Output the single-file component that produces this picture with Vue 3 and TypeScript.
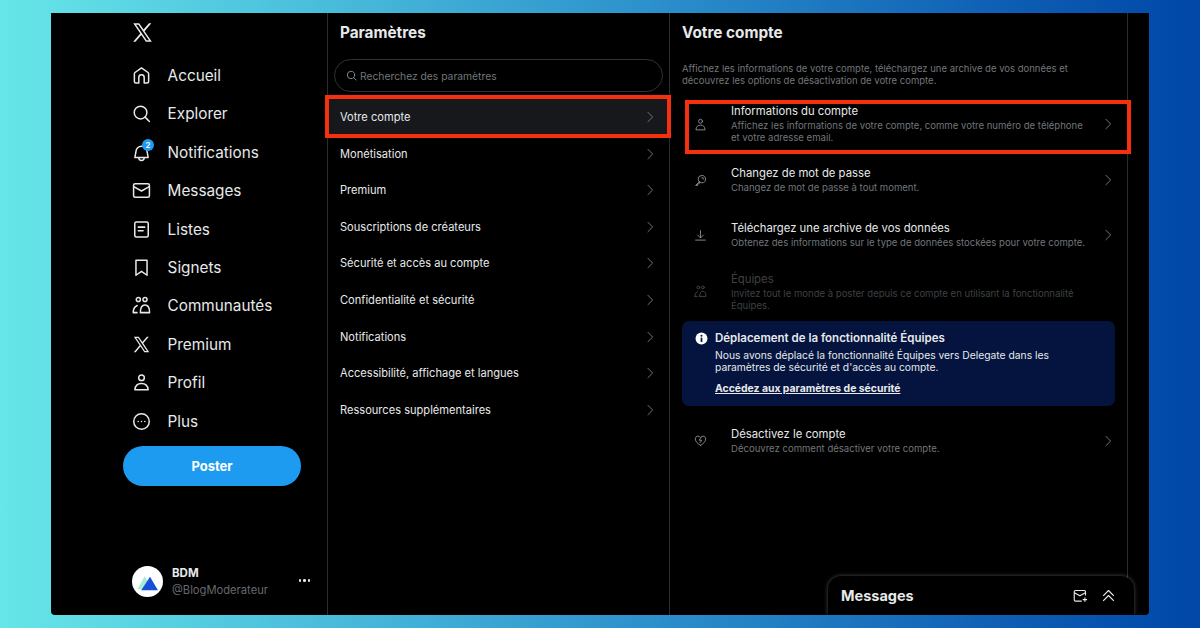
<script setup lang="ts">
interface NavItem {
  label: string
  icon: string
}

interface AccountRow {
  title: string
  desc: string[]
  icon: string
  height: number
  disabled?: boolean
}

const navItems: NavItem[] = [
  { label: 'Accueil', icon: 'home' },
  { label: 'Explorer', icon: 'search' },
  { label: 'Notifications', icon: 'bell' },
  { label: 'Messages', icon: 'mail' },
  { label: 'Listes', icon: 'list' },
  { label: 'Signets', icon: 'bookmark' },
  { label: 'Communautés', icon: 'people' },
  { label: 'Premium', icon: 'x' },
  { label: 'Profil', icon: 'user' },
  { label: 'Plus', icon: 'more' }
]

const settings = [
  'Votre compte',
  'Monétisation',
  'Premium',
  'Souscriptions de créateurs',
  'Sécurité et accès au compte',
  'Confidentialité et sécurité',
  'Notifications',
  'Accessibilité, affichage et langues',
  'Ressources supplémentaires'
]

const topRows: AccountRow[] = [
  {
    title: 'Informations du compte',
    desc: ['Affichez les informations de votre compte, comme votre numéro de téléphone', 'et votre adresse email.'],
    icon: 'user',
    height: 56
  },
  {
    title: 'Changez de mot de passe',
    desc: ['Changez de mot de passe à tout moment.'],
    icon: 'key',
    height: 56
  },
  {
    title: 'Téléchargez une archive de vos données',
    desc: ['Obtenez des informations sur le type de données stockées pour votre compte.'],
    icon: 'download',
    height: 54
  },
  {
    title: 'Équipes',
    desc: ['Invitez tout le monde à poster depuis ce compte en utilisant la fonctionnalité', 'Équipes.'],
    icon: 'people',
    height: 59,
    disabled: true
  }
]

const deactivateRow: AccountRow = {
  title: 'Désactivez le compte',
  desc: ['Découvrez comment désactiver votre compte.'],
  icon: 'heart',
  height: 55
}
</script>

<template>
  <div class="page">
    <div class="window">
      <aside class="sidebar">
        <svg class="logo" viewBox="0 0 24 24">
          <path d="M21.742 21.75l-7.563-11.179 7.056-8.321h-2.456l-5.691 6.714-4.54-6.714H2.359l7.29 10.776L2.25 21.75h2.456l6.035-7.118 4.818 7.118h6.191-.008zM7.739 3.818L18.81 20.182h-2.447L5.29 3.818h2.447z" />
        </svg>
        <nav class="nav">
          <div v-for="item in navItems" :key="item.label" class="nav-item">
            <span class="nav-icon">
              <svg viewBox="0 0 24 24" class="icon">
                <path v-if="item.icon === 'home'" d="M12 2.4 20.2 8.2a2 2 0 0 1 .8 1.6v9.700a2 2 0 0 1-2 2h-3.600v-7a3.400 3.400 0 0 0-6.800 0v7H5a2 2 0 0 1-2-2V9.800a2 2 0 0 1 .8-1.600z" />
                <g v-else-if="item.icon === 'search'">
                  <circle cx="10.8" cy="10.8" r="8" />
                  <path d="M16.6 16.6 22 22" />
                </g>
                <g v-else-if="item.icon === 'bell'">
                  <path d="M12 4a7 7 0 0 0-7 6.8L3.6 18.4h16.800L19 10.300a7 7 0 0 0-7-6.300z" />
                  <path d="M8.6 18.6a3.4 3.4 0 0 0 6.8 0" />
                </g>
                <g v-else-if="item.icon === 'mail'">
                  <rect x="2" y="3.5" width="20" height="17" rx="2" />
                  <path d="M2.2 7.2 12 12.6l9.8-5.4" />
                </g>
                <g v-else-if="item.icon === 'list'">
                  <rect x="3.5" y="2.5" width="17" height="19" rx="2" />
                  <path d="M8 9h8M8 13.5h6" />
                </g>
                <path v-else-if="item.icon === 'bookmark'" d="M5 2.8h14v19l-7-5-7 5z" />
                <g v-else-if="item.icon === 'people'">
                  <circle cx="8" cy="4.5" r="2.6" />
                  <circle cx="16.4" cy="4.5" r="2.6" />
                  <path d="M10.6 21h11.6c0-6-2-9.600-5.800-9.600s-5.800 3.600-5.800 9.600z" />
                  <path d="M1.5 21h4.8M1.6 20.6c0-3.6 1.6-7.2 5-8.6" />
                </g>
                <path v-else-if="item.icon === 'x'" class="filled" d="M21.742 21.75l-7.563-11.179 7.056-8.321h-2.456l-5.691 6.714-4.54-6.714H2.359l7.29 10.776L2.25 21.75h2.456l6.035-7.118 4.818 7.118h6.191-.008zM7.739 3.818L18.81 20.182h-2.447L5.29 3.818h2.447z" />
                <g v-else-if="item.icon === 'user'">
                  <circle cx="12" cy="6" r="3.6" />
                  <path d="M3.6 21.2c.4-5.6 3.6-8 8.4-8s8 2.4 8.4 8z" />
                </g>
                <g v-else>
                  <circle cx="12" cy="12" r="9.8" />
                  <circle class="filled" cx="7.8" cy="12" r="1" />
                  <circle class="filled" cx="12" cy="12" r="1" />
                  <circle class="filled" cx="16.2" cy="12" r="1" />
                </g>
              </svg>
              <span v-if="item.icon === 'bell'" class="badge">2</span>
            </span>
            <span class="nav-label">{{ item.label }}</span>
          </div>
        </nav>
        <button class="post-btn" type="button">Poster</button>
        <div class="account">
          <svg class="avatar" viewBox="0 0 32 32">
            <circle cx="16" cy="16" r="16" fill="#fff" />
            <path d="M5.5 24 13 10.5l2.8 4.6L11 24z" fill="#a8ecd3" />
            <path d="M9.5 25 18.6 11 26.8 25z" fill="#1450d8" />
          </svg>
          <div class="account-text">
            <div class="account-name">BDM</div>
            <div class="account-handle">@BlogModerateur</div>
          </div>
          <span class="account-more">
            <i></i><i></i><i></i>
          </span>
        </div>
      </aside>

      <section class="settings">
        <h2 class="heading">Paramètres</h2>
        <div class="search">
          <svg viewBox="0 0 24 24" class="search-icon">
            <circle cx="10.8" cy="10.8" r="8" />
            <path d="M16.6 16.6 22 22" />
          </svg>
          <span>Recherchez des paramètres</span>
        </div>
        <div class="settings-list">
          <div
            v-for="(name, index) in settings"
            :key="name"
            class="settings-row"
            :class="{ active: index === 0 }"
          >
            <span>{{ name }}</span>
            <svg viewBox="0 0 24 24" class="chevron"><path d="M8 3.5 16.5 12 8 20.5" /></svg>
          </div>
        </div>
      </section>

      <section class="detail">
        <h2 class="heading">Votre compte</h2>
        <p class="intro">
          Affichez les informations de votre compte, téléchargez une archive de vos données et<br />
          découvrez les options de désactivation de votre compte.
        </p>
        <div class="rows">
          <div
            v-for="(row, index) in topRows"
            :key="row.title"
            class="row"
            :class="{ disabled: row.disabled, highlighted: index === 0 }"
            :style="{ height: row.height + 'px' }"
          >
            <svg viewBox="0 0 24 24" class="row-icon">
              <g v-if="row.icon === 'user'">
                <circle cx="12" cy="6" r="3.6" />
                <path d="M3.6 21.2c.4-5.6 3.600-8 8.400-8s8 2.400 8.400 8z" />
              </g>
              <g v-else-if="row.icon === 'key'">
                <circle cx="14.5" cy="9.5" r="6.8" />
                <path d="M9.8 14.4 3 21.2h3.2l.4-2.800 3-.4.4-2.800" />
                <path d="M14.5 7H17v2.500" />
              </g>
              <g v-else-if="row.icon === 'download'">
                <path d="M12 3v13M6.5 11l5.500 5.500 5.500-5.500M3 20.500h18" />
              </g>
              <g v-else>
                <circle cx="8" cy="4.5" r="2.6" />
                <circle cx="16.4" cy="4.5" r="2.6" />
                <path d="M10.6 21h11.6c0-6-2-9.600-5.800-9.600s-5.800 3.600-5.800 9.600z" />
                <path d="M1.5 21h4.8M1.6 20.6c0-3.6 1.6-7.2 5-8.6" />
              </g>
            </svg>
            <div class="row-text">
              <div class="row-title">{{ row.title }}</div>
              <div class="row-desc">
                <div v-for="line in row.desc" :key="line">{{ line }}</div>
              </div>
            </div>
            <svg v-if="!row.disabled" viewBox="0 0 24 24" class="chevron"><path d="M8 3.5 16.5 12 8 20.5" /></svg>
          </div>
        </div>

        <div class="notice">
          <svg viewBox="0 0 24 24" class="notice-icon">
            <circle cx="12" cy="12" r="11" fill="#fff" />
            <rect x="10.4" y="10.4" width="3.2" height="8" fill="#04143f" />
            <circle cx="12" cy="7" r="1.9" fill="#04143f" />
          </svg>
          <div>
            <div class="notice-title">Déplacement de la fonctionnalité Équipes</div>
            <p class="notice-body">
              Nous avons déplacé la fonctionnalité Équipes vers Delegate dans les<br />
              paramètres de sécurité et d'accès au compte.
            </p>
            <span class="notice-link">Accédez aux paramètres de sécurité</span>
          </div>
        </div>

        <div class="row deactivate" :style="{ height: deactivateRow.height + 'px' }">
          <svg viewBox="0 0 24 24" class="row-icon">
            <path d="M12 21C6 17.5 2.4 13.4 2.4 9c0-3 2.200-5 4.800-5 1.900 0 3.700 1 4.800 2.400C13.100 5 14.900 4 16.800 4c2.600 0 4.800 2 4.800 5 0 4.400-3.600 8.500-9.600 12z" />
            <path d="M13 6.5 9.5 11.5h5L11 16" />
          </svg>
          <div class="row-text">
            <div class="row-title">{{ deactivateRow.title }}</div>
            <div class="row-desc">
              <div v-for="line in deactivateRow.desc" :key="line">{{ line }}</div>
            </div>
          </div>
          <svg viewBox="0 0 24 24" class="chevron"><path d="M8 3.5 16.5 12 8 20.5" /></svg>
        </div>
      </section>

      <div class="drawer">
        <span class="drawer-title">Messages</span>
        <svg viewBox="0 0 24 24" class="drawer-icon">
          <path d="M20 12V6a2 2 0 0 0-2-2H4a2 2 0 0 0-2 2v13a2 2 0 0 0 2 2h10" />
          <path d="M2.2 7.5 11 12.5l8.800-5M19 15v7M15.5 18.5h7" />
        </svg>
        <svg viewBox="0 0 24 24" class="drawer-icon chev-up">
          <path d="M3.5 12.5 12 4l8.500 8.500M3.500 20.500 12 12l8.500 8.500" />
        </svg>
      </div>
    </div>
  </div>
</template>

<style scoped>
.page {
  width: 1200px;
  height: 628px;
  box-sizing: border-box;
  padding: 13px 51px;
  overflow: hidden;
  background: linear-gradient(90deg, #66e6e8 0%, #4fc4de 22%, #2b8fcb 55%, #0d5cb3 85%, #0047a8 100%);
  font-family: Inter, 'Noto Sans', sans-serif;
  color: #e7e9ea;
}

.window {
  position: relative;
  display: flex;
  width: 1098px;
  height: 602px;
  background: #000;
  border-radius: 0 0 4px 4px;
  overflow: hidden;
}

.sidebar {
  display: flex;
  flex-direction: column;
  width: 277px;
  flex: none;
  box-sizing: border-box;
  padding: 8px 0 0 72px;
  border-right: 1px solid #2a2d30;
}

.logo {
  width: 23px;
  height: 23px;
  margin-left: 8px;
  fill: #e7e9ea;
}

.nav {
  display: flex;
  flex-direction: column;
  margin-top: 12.4px;
}

.nav-item {
  display: flex;
  align-items: center;
  height: 38.4px;
  padding-left: 9px;
}

.nav-icon {
  position: relative;
  display: flex;
  width: 35.6px;
  flex: none;
}

.icon {
  width: 19px;
  height: 19px;
  fill: none;
  stroke: #e7e9ea;
  stroke-width: 1.9;
  stroke-linejoin: round;
  stroke-linecap: round;
}

.icon .filled {
  fill: #e7e9ea;
  stroke: none;
}

.badge {
  position: absolute;
  left: 10px;
  top: -4px;
  width: 12px;
  height: 12px;
  border-radius: 50%;
  background: #1d9bf0;
  color: #fff;
  font-size: 8px;
  font-weight: 600;
  line-height: 12px;
  text-align: center;
}

.nav-label {
  font-size: 15.3px;
}

.post-btn {
  width: 178px;
  height: 40px;
  margin-top: 5.6px;
  border: none;
  border-radius: 20px;
  background: #1d9bf0;
  color: #fff;
  font-family: inherit;
  font-size: 13px;
  font-weight: 700;
}

.account {
  display: flex;
  align-items: center;
  margin-top: 80px;
  padding-left: 9px;
}

.avatar {
  width: 31px;
  height: 31px;
  flex: none;
}

.account-text {
  margin-left: 9px;
  flex: 1;
}

.account-name {
  font-size: 11.5px;
  font-weight: 700;
  line-height: 15px;
}

.account-handle {
  margin-top: 1px;
  font-size: 11.2px;
  line-height: 16px;
  color: #65696e;
}

.account-more {
  display: flex;
  gap: 2px;
  margin-right: 17px;
  margin-top: -3px;
}

.account-more i {
  width: 2.5px;
  height: 2.5px;
  border-radius: 50%;
  background: #e7e9ea;
}

.settings {
  width: 342px;
  flex: none;
  box-sizing: border-box;
  border-right: 1px solid #2a2d30;
}

.heading {
  margin: 0;
  padding: 10px 0 0 12px;
  font-size: 15.3px;
  font-weight: 700;
  line-height: 20px;
  color: #e7e9ea;
}

.search {
  display: flex;
  align-items: center;
  box-sizing: border-box;
  height: 33px;
  margin: 16px 6px 0 6px;
  padding-left: 11px;
  border: 1px solid #2f3336;
  border-radius: 17px;
  font-size: 10.3px;
  color: #71767b;
}

.search-icon {
  width: 11px;
  height: 11px;
  margin-right: 3px;
  fill: none;
  stroke: #8b9094;
  stroke-width: 2;
  stroke-linecap: round;
}

.settings-list {
  display: flex;
  flex-direction: column;
  margin-top: 3px;
}

.settings-row {
  display: flex;
  align-items: center;
  justify-content: space-between;
  flex: none;
  height: 36.6px;
  padding: 0 12px 0 12px;
  font-size: 11.1px;
  color: #e7e9ea;
}

.chevron {
  width: 14px;
  height: 14px;
  flex: none;
  fill: none;
  stroke: #71767b;
  stroke-width: 1.7;
}

.settings-row.active {
  position: relative;
  z-index: 1;
  height: 43px;
  margin: 0 -2px -2.7px -3px;
  padding: 0 14px 0 15px;
  background: #16181c;
  outline: 4px solid #f4300f;
  outline-offset: -4px;
}

.detail {
  flex: none;
  width: 458px;
  box-sizing: border-box;
  border-right: 1px solid #2a2d30;
}

.intro {
  margin: 20px 0 0 12px;
  font-size: 9.5px;
  line-height: 12.2px;
  color: #71767b;
}

.rows {
  display: flex;
  flex-direction: column;
  margin-top: 8.6px;
}

.row {
  display: flex;
  align-items: center;
  position: relative;
  box-sizing: border-box;
  padding: 0 12px 0 24px;
}

.row.highlighted::after {
  content: '';
  position: absolute;
  left: 15px;
  right: -4px;
  top: 4px;
  bottom: -2px;
  border: 4px solid #f4300f;
  pointer-events: none;
}

.row-icon {
  width: 13px;
  height: 13px;
  flex: none;
  fill: none;
  stroke: #8b9094;
  stroke-width: 1.7;
  stroke-linejoin: round;
  stroke-linecap: round;
}

.row-text {
  flex: 1;
  margin-left: 24px;
}

.row-title {
  font-size: 11.3px;
  line-height: 14px;
  color: #e7e9ea;
}

.row-desc {
  margin-top: 2px;
  font-size: 9.55px;
  line-height: 12px;
  color: #71767b;
}

.row.disabled .row-title,
.row.disabled .row-desc {
  color: #3e4144;
}

.row.disabled .row-icon {
  stroke: #44474a;
}

.notice {
  display: flex;
  gap: 7px;
  width: 433px;
  height: 85px;
  box-sizing: border-box;
  margin: 0 0 0 12px;
  padding: 10px 13px;
  border-radius: 7px;
  background: #04143f;
}

.notice-icon {
  width: 13px;
  height: 13px;
  flex: none;
  margin-top: 1px;
}

.notice-title {
  font-size: 11.5px;
  font-weight: 600;
  line-height: 15px;
}

.notice-body {
  margin: 2.5px 0 0;
  font-size: 10.3px;
  line-height: 12.5px;
}

.notice-link {
  display: inline-block;
  margin-top: 9.5px;
  font-size: 10.4px;
  font-weight: 700;
  line-height: 12px;
  text-decoration: underline;
}

.deactivate {
  margin-top: 7px;
}

.drawer {
  position: absolute;
  right: 15px;
  bottom: 0;
  display: flex;
  align-items: center;
  width: 306px;
  height: 39px;
  box-sizing: border-box;
  padding: 0 18px 0 13px;
  background: #000;
  border-radius: 13px 13px 0 0;
  box-shadow: 0 0 4px rgba(255, 255, 255, 0.3);
}

.drawer-title {
  flex: 1;
  font-size: 14.5px;
  font-weight: 700;
}

.drawer-icon {
  width: 15px;
  height: 15px;
  fill: none;
  stroke: #e7e9ea;
  stroke-width: 1.8;
  stroke-linejoin: round;
}

.chev-up {
  margin-left: 13px;
}
</style>

<style>
html,
body {
  margin: 0;
}
</style>
